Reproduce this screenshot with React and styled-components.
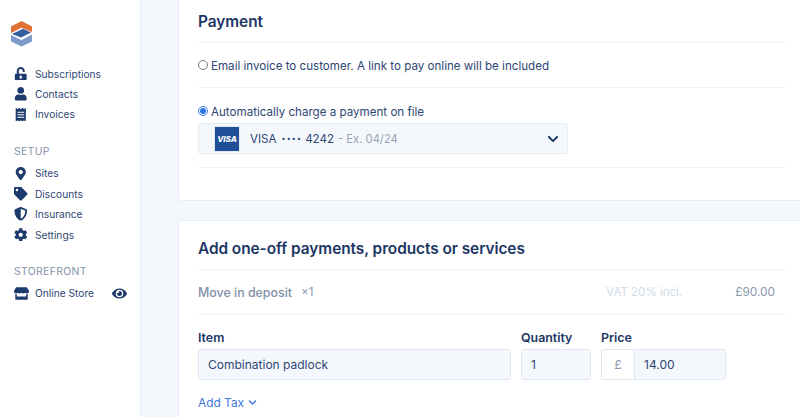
import React from "react";
import styled, { createGlobalStyle } from "styled-components";
import { FaUnlockAlt, FaUser, FaReceipt, FaMapMarkerAlt, FaTag, FaShieldAlt, FaCog, FaStore, FaEye, FaChevronDown } from "react-icons/fa";

const Global = createGlobalStyle`
  html, body { margin: 0; padding: 0; background: #f4f8fc; }
  * { box-sizing: border-box; }
  body { font-family: Inter, "Liberation Sans", sans-serif; color: #1c3664; }
`;
const Page = styled.div`display: flex; width: 800px; height: 417px; overflow: hidden;`;
const Sidebar = styled.nav`
  width: 141px; flex: none; background: #fff; border-right: 1px solid #e6eef7;
  padding: 21px 0 0 11px; display: flex; flex-direction: column;
`;
const LogoWrap = styled.div`height: 26px; margin-bottom: 16.5px; display: flex;`;
const NavGroup = styled.div`display: flex; flex-direction: column; margin-bottom: 20.5px;`;
const GroupTitle = styled.div`
  font-size: 10.4px; line-height: 14px; letter-spacing: .35px; color: #8592a8; font-weight: 400;
  margin: 0 0 4px 3px;
`;
const NavItem = styled.div`
  height: 20.4px; display: flex; align-items: center; font-size: 10.2px; color: #2d4674;
`;
const NavIcon = styled.span`
  width: 20px; margin-right: 4px; flex: none; display: flex; justify-content: center; color: #1c3a6b; font-size: ${p => p.$s || 13.5}px;
`;
const NavEye = styled.span`
  margin-left: auto; margin-right: 13px; display: flex; color: #1c3a6b; font-size: 15px;
`;
const Main = styled.main`flex: 1; padding-left: 37px; display: flex; flex-direction: column; gap: 19px; min-width: 0;`;
const Card = styled.section`
  width: 622px; flex: none; background: #fff; border: 1px solid #e6edf5; border-right: 0;
  padding: 0 15px ${p => p.$pb || 0}px 19px; border-radius: ${p => p.$top ? "0 0 0 4px" : "4px 0 0 0"};
  border-top: ${p => p.$top ? "0" : undefined};
`;
const Title = styled.h2`
  margin: 0; font-size: 15.4px; font-weight: 600; color: #1c3664; letter-spacing: -.05px;
  height: ${p => p.$h}px; display: flex; align-items: center; border-bottom: 1.5px solid #edf2f8; padding-top: ${p => p.$pt || 0}px;
`;
const RadioRow = styled.label`display: flex; align-items: center; gap: 3px; font-size: 11.6px; color: #2d4674; height: 16px;`;
const Radio = styled.span`
  width: 10px; height: 10px; border-radius: 50%; flex: none; margin-top: -2px;
  border: 1px solid ${p => p.$on ? "#3d7ee8" : "#77787d"}; background: #fff;
  display: flex; align-items: center; justify-content: center;
  &::after { content: ""; width: 6px; height: 6px; border-radius: 50%; background: ${p => p.$on ? "#2f74e6" : "transparent"}; }
`;
const Section = styled.div`
  padding: ${p => p.$pad}; border-bottom: 1.5px solid #edf2f8;
`;
const Select = styled.div`
  margin-top: 3px; width: 370px; height: 31px; background: #f4f8fc; border: 1px solid #e3ebf3; border-radius: 3px;
  display: flex; align-items: center; padding: 0 8px 0 15px; font-size: 11.6px; color: #2d4674;
`;
const Visa = styled.span`
  width: 26px; height: 26px; background: #1f4f97; color: #fff; font-size: 8px; font-weight: 800; font-style: italic;
  display: flex; align-items: center; justify-content: center; margin-right: 10px; border: 1px solid #e3ebf3;
`;
const Dots = styled.span`font-size: 7px; letter-spacing: 1.2px; margin: 0 3px 0 5px;`;
const Muted = styled.span`color: #98a3b4; margin-left: 4px; font-size: 11.2px;`;
const Chev = styled.span`margin-left: auto; display: flex; color: #1c3664; font-size: 12px;`;
const Line = styled.div`
  height: 45px; display: flex; align-items: center; border-bottom: 1.5px solid #edf2f8; font-size: 12.4px; color: #8a97ad;
`;
const LineName = styled.span`font-weight: 500; color: #8090a9;`;
const Qty = styled.span`margin-left: 9px; color: #8d99ae; font-size: 11.6px;`;
const Vat = styled.span`margin-left: auto; color: #d3dbe6; width: 129px; font-size: 11.5px;`;
const Amount = styled.span`margin-right: 10px; color: #8b98af; font-size: 11.8px;`;
const Fields = styled.div`display: flex; gap: 10px; margin-top: 15px;`;
const Field = styled.div`display: flex; flex-direction: column; width: ${p => p.$w}px;`;
const Label = styled.div`font-size: 12.4px; font-weight: 600; color: #1c3664; line-height: 15px; margin-bottom: 4px;`;
const Input = styled.div`
  height: 31px; background: #f4f8fc; border: 1px solid #e0e8f1; border-radius: 3px; flex: 1; min-width: 0;
  display: flex; align-items: center; padding: 0 9px; font-size: 12px; color: #2d4674;
`;
const Group = styled.div`display: flex; height: 31px;`;
const Prefix = styled.div`
  width: 33px; flex: none; border: 1px solid #e0e8f1; border-right: 0; border-radius: 3px 0 0 3px; background: #fff;
  display: flex; align-items: center; justify-content: center; font-size: 12px; color: #8d99ae;
`;
const PriceInput = styled(Input)`border-radius: 0 3px 3px 0;`;
const AddTax = styled.div`
  display: flex; align-items: center; gap: 4px; margin-top: 15px; font-size: 11.9px; color: #3f78d8;
  svg { font-size: 9px; }
`;
const Spacer = styled.div`height: 32px;`;

const Logo = () => (
  <svg width="22" height="26" viewBox="0 0 22 26">
    <path d="M10.5 0 21 5.6V11L10.5 6.8 0 12V5.6z" fill="#e07238" />
    <path d="M0 14 10.5 19 21 13.5V20.4L10.5 25.6 0 20.4z" fill="#7f9ccb" />
    <path d="M1 13 12 7.8 20 11.6 10 16.5z" fill="#35609f" />
  </svg>
);

export default function App() {
  return (
    <Page>
      <Global />
      <Sidebar>
        <LogoWrap><Logo /></LogoWrap>
        <NavGroup>
          <NavItem><NavIcon><FaUnlockAlt /></NavIcon>Subscriptions</NavItem>
          <NavItem><NavIcon><FaUser /></NavIcon>Contacts</NavItem>
          <NavItem><NavIcon><FaReceipt /></NavIcon>Invoices</NavItem>
        </NavGroup>
        <NavGroup>
          <GroupTitle>SETUP</GroupTitle>
          <NavItem><NavIcon><FaMapMarkerAlt /></NavIcon>Sites</NavItem>
          <NavItem><NavIcon><FaTag /></NavIcon>Discounts</NavItem>
          <NavItem><NavIcon><FaShieldAlt /></NavIcon>Insurance</NavItem>
          <NavItem><NavIcon><FaCog /></NavIcon>Settings</NavItem>
        </NavGroup>
        <NavGroup>
          <GroupTitle>STOREFRONT</GroupTitle>
          <NavItem><NavIcon $s={15}><FaStore /></NavIcon>Online Store<NavEye><FaEye /></NavEye></NavItem>
        </NavGroup>
      </Sidebar>
      <Main>
        <Card $top>
          <Title $h={43}>Payment</Title>
          <Section $pad="15px 0 13px">
            <RadioRow><Radio />Email invoice to customer. A link to pay online will be included</RadioRow>
          </Section>
          <Section $pad="16px 0 13px">
            <RadioRow><Radio $on />Automatically charge a payment on file</RadioRow>
            <Select>
              <Visa>VISA</Visa>VISA<Dots>••••</Dots>4242<Muted>- Ex. 04/24</Muted>
              <Chev><FaChevronDown /></Chev>
            </Select>
          </Section>
          <Spacer />
        </Card>
        <Card $pb={40}>
          <Title $h={49} $pt={7}>Add one-off payments, products or services</Title>
          <Line>
            <LineName>Move in deposit</LineName><Qty>×1</Qty>
            <Vat>VAT 20% incl.</Vat><Amount>£90.00</Amount>
          </Line>
          <Fields>
            <Field $w={313}><Label>Item</Label><Input>Combination padlock</Input></Field>
            <Field $w={70}><Label>Quantity</Label><Input>1</Input></Field>
            <Field $w={125}><Label>Price</Label><Group><Prefix>£</Prefix><PriceInput>14.00</PriceInput></Group></Field>
          </Fields>
          <AddTax>Add Tax <FaChevronDown /></AddTax>
        </Card>
      </Main>
    </Page>
  );
}
